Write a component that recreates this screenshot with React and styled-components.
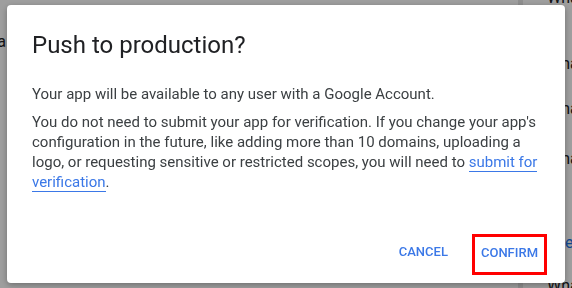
import React from "react";
import styled, { createGlobalStyle } from "styled-components";

const GlobalStyle = createGlobalStyle`
  html, body {
    margin: 0;
    padding: 0;
    width: 572px;
    height: 288px;
    overflow: hidden;
    font-family: Roboto, "Liberation Sans", Arial, sans-serif;
  }
`;

const Page = styled.div`
  display: flex;
  width: 572px;
  height: 288px;
  background: #fff;
  color: #202124;
  font-size: 16px;
`;

const LeftCol = styled.div`
  width: 6px;
  overflow: hidden;
  display: flex;
  justify-content: flex-end;
  padding-top: 32px;
  white-space: nowrap;
`;

const Spacer = styled.div`
  flex: 1;
`;

const ScrollTrack = styled.div`
  width: 5px;
  height: 100%;
  background: #e6e6e6;
  margin-right: 24px;
`;

const RightCol = styled.div`
  width: 25px;
  overflow: hidden;
  display: flex;
  flex-direction: column;
  white-space: nowrap;
`;

const BackLine = styled.div`
  margin-top: ${(p) => p.$gap}px;
  line-height: 20px;
  color: ${(p) => (p.$link ? "#1a73e8" : "#202124")};
`;

const Scrim = styled.div`
  position: fixed;
  inset: 0;
  background: rgba(0, 0, 0, 0.38);
  display: flex;
  padding: 5px 7px 5px 7px;
`;

const Dialog = styled.div`
  flex: 1;
  background: #fff;
  border-radius: 4px;
  box-shadow: 0 2px 6px rgba(0, 0, 0, 0.3);
  display: flex;
  flex-direction: column;
  padding: 24px 0 8px 25px;
`;

const Title = styled.h2`
  margin: 0 0 23px;
  font-size: 24px;
  line-height: 32px;
  font-weight: 400;
  color: #202124;
`;

const Body = styled.div`
  padding-right: 24px;
  font-size: 15px;
  line-height: 20px;
  color: #3c4043;
  display: flex;
  flex-direction: column;
  gap: 8px;
`;

const Para = styled.p`
  margin: 0;
`;

const Link = styled.a`
  color: #3b78e7;
  text-decoration: none;
  border-bottom: 1px solid #3b78e7;
`;

const Actions = styled.div`
  margin-top: auto;
  display: flex;
  justify-content: flex-end;
  align-items: center;
  gap: 16px;
  padding-right: 18px;
`;

const Button = styled.button`
  font-family: Roboto, "Liberation Sans", Arial, sans-serif;
  font-size: 13px;
  font-weight: 500;
  letter-spacing: 0;
  text-transform: uppercase;
  color: #3b78e7;
  background: transparent;
  height: ${(p) => (p.$highlight ? 41 : 36)}px;
  padding: ${(p) => (p.$highlight ? "0 6px 4px" : "0 8px 0")};
  margin-bottom: ${(p) => (p.$highlight ? 0 : 6)}px;
  border: ${(p) => (p.$highlight ? "3px solid #ff0000" : "none")};
  border-radius: 0;
  cursor: pointer;
`;

const backLines = [
  { gap: -12, text: "What" },
  { gap: 46, text: "What" },
  { gap: 25, text: "What" },
  { gap: 30, text: "What" },
  { gap: 64, text: "See", link: true },
  { gap: 23, text: "What" },
];

const App = () => (
  <>
    <GlobalStyle />
    <Page>
      <LeftCol>
        <span>data</span>
      </LeftCol>
      <Spacer />
      <ScrollTrack />
      <RightCol>
        {backLines.map((l, i) => (
          <BackLine key={i} $gap={l.gap} $link={l.link}>
            {l.text}
          </BackLine>
        ))}
      </RightCol>
    </Page>
    <Scrim>
      <Dialog>
        <Title>Push to production?</Title>
        <Body>
          <Para>Your app will be available to any user with a Google Account.</Para>
          <Para>
            You do not need to submit your app for verification. If you change your app's
            configuration in the future, like adding more than 10 domains, uploading a
            logo, or requesting sensitive or restricted scopes, you will need to{" "}
            <Link href="#">submit for verification</Link>.
          </Para>
        </Body>
        <Actions>
          <Button>Cancel</Button>
          <Button $highlight>Confirm</Button>
        </Actions>
      </Dialog>
    </Scrim>
  </>
);

export default App;
